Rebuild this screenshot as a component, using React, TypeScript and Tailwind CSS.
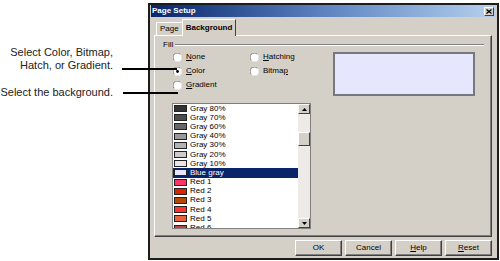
const colors = [
  { name: 'Gray 80%', c: '#333333' },
  { name: 'Gray 70%', c: '#4c4c4c' },
  { name: 'Gray 60%', c: '#666666' },
  { name: 'Gray 40%', c: '#999999' },
  { name: 'Gray 30%', c: '#b3b3b3' },
  { name: 'Gray 20%', c: '#cccccc' },
  { name: 'Gray 10%', c: '#e6e6e6' },
  { name: 'Blue gray', c: '#e6e6ff', selected: true },
  { name: 'Red 1', c: '#ff3366' },
  { name: 'Red 2', c: '#dc2300' },
  { name: 'Red 3', c: '#b84700' },
  { name: 'Red 4', c: '#ff3333' },
  { name: 'Red 5', c: '#eb613d' },
  { name: 'Red 6', c: '#b84747' },
];

function Radio({ checked }: { checked?: boolean }) {
  return (
    <svg width="9" height="9" viewBox="0 0 9 9" className="shrink-0">
      <circle cx="4.5" cy="4.5" r="4" fill="#fff" />
      <path d="M1.2 7.2 A4 4 0 0 1 7.2 1.2" fill="none" stroke="#808080" strokeWidth="1" />
      <path d="M7.8 1.8 A4 4 0 0 1 1.8 7.8" fill="none" stroke="#e8e8e8" strokeWidth="1" />
      {checked && <circle cx="4.5" cy="4.5" r="1.4" fill="#000" />}
    </svg>
  );
}

function RadioItem({ label, u, checked }: { label: string; u: number; checked?: boolean }) {
  return (
    <div className="flex items-center gap-[4px] h-[14px]">
      <Radio checked={checked} />
      <span>
        {label.slice(0, u)}
        <span className="underline">{label[u]}</span>
        {label.slice(u + 1)}
      </span>
    </div>
  );
}

function Btn({ children }: { children: React.ReactNode }) {
  return (
    <button className="w-[47px] h-[16px] bg-[#d4d0c8] border border-t-white border-l-white border-r-[#404040] border-b-[#404040] shadow-[inset_-1px_-1px_0_#808080] text-[8px] text-black flex items-center justify-center">
      {children}
    </button>
  );
}

function Arrow({ down }: { down?: boolean }) {
  return (
    <div className="w-[12px] h-[10px] bg-[#d4d0c8] border border-t-white border-l-white border-r-[#404040] border-b-[#404040] flex items-center justify-center">
      <svg width="5" height="3" viewBox="0 0 5 3">
        <path d={down ? 'M0 0 H5 L2.5 3 Z' : 'M0 3 H5 L2.5 0 Z'} fill="#000" />
      </svg>
    </div>
  );
}

export default function App() {
  return (
    <div className="relative w-[500px] h-[261px] bg-white overflow-hidden font-['Liberation_Sans',Arial,sans-serif]">
      <div className="flex">
        {/* Annotations */}
        <div className="w-[148px] pr-[35px] text-right text-[11px] leading-[12.5px] text-[#222]">
          <p className="mt-[46px]">Select Color, Bitmap,</p>
          <p>Hatch, or Gradient.</p>
          <p className="mt-[15px]">Select the background.</p>
        </div>

        {/* Dialog */}
        <div className="mt-[3px] w-[351px] h-[257px] bg-[#d4d0c8] border-2 border-[#1c1c1c] flex flex-col text-[8px] text-black">
          {/* Title bar */}
          <div className="mx-[1px] h-[12px] bg-gradient-to-r from-[#0a246a] via-[#5d84c0] to-[#b6d0ee] flex items-center justify-between pl-[1px] pr-[2px]">
            <span className="text-white font-bold text-[8px] leading-none">Page Setup</span>
            <div className="w-[10px] h-[9px] bg-[#d4d0c8] border border-t-white border-l-white border-r-[#404040] border-b-[#404040] flex items-center justify-center">
              <svg width="6" height="5" viewBox="0 0 6 5">
                <path d="M0.5 0.5 L5.5 4.5 M5.5 0.5 L0.5 4.5" stroke="#000" strokeWidth="1.3" />
              </svg>
            </div>
          </div>

          {/* Tabs */}
          <div className="h-[18px] flex items-end pl-[6px]">
            <div className="h-[13px] px-[3px] flex items-center border-t border-l border-white">Page</div>
            <div className="relative z-10 -mb-[1px] h-[17px] px-[3px] flex items-center font-bold bg-[#d4d0c8] border-t border-l border-white border-r border-r-[#404040]">
              Background
            </div>
          </div>

          {/* Panel */}
          <div className="ml-[4px] mr-[5px] h-[202px] border border-t-white border-l-white border-r-[#404040] border-b-[#404040] shadow-[inset_-1px_-1px_0_#808080] pl-[8px] pt-[4px]">
            <div className="flex items-center h-[10px] pr-[7px]">
              <span>Fill</span>
              <div className="flex-1 ml-[2px] h-[2px] border-t border-[#808080] border-b border-b-white" />
            </div>

            <div className="flex ml-[9px]">
              <div className="w-[139px] flex flex-col">
                <div className="grid grid-cols-[77px_auto] pl-[1px]">
                  <RadioItem label="None" u={0} />
                  <RadioItem label="Hatching" u={0} />
                  <RadioItem label="Color" u={0} checked />
                  <RadioItem label="Bitmap" u={5} />
                  <RadioItem label="Gradient" u={0} />
                </div>

                {/* Color list */}
                <div className="mt-[11px] h-[126px] border border-[#808080] bg-white flex overflow-hidden">
                  <div className="flex-1 flex flex-col">
                    {colors.map((c) => (
                      <div
                        key={c.name}
                        className={`h-[9.2px] shrink-0 flex items-center pl-[1px] ${c.selected ? 'bg-[#0a246a] text-white' : ''}`}
                      >
                        <div className="w-[13px] h-[7px] border border-[#222]" style={{ background: c.c }} />
                        <span className="ml-[3px] leading-none">{c.name}</span>
                      </div>
                    ))}
                  </div>
                  <div className="w-[12px] bg-[#eeeae8] flex flex-col">
                    <Arrow />
                    <div className="mt-[18px] w-[12px] h-[14px] bg-[#d4d0c8] border border-t-white border-l-white border-r-[#404040] border-b-[#404040]" />
                    <div className="flex-1" />
                    <Arrow down />
                  </div>
                </div>
              </div>

              {/* Preview */}
              <div className="ml-[22px] mt-[2px] w-[142px] h-[44px] bg-[#e6e6ff] border-2 border-[#77777f]" />
            </div>
          </div>

          {/* Buttons */}
          <div className="mt-[3px] flex justify-end gap-[3px] pr-[5px]">
            <Btn>OK</Btn>
            <Btn>Cancel</Btn>
            <Btn>
              <span className="underline">H</span>elp
            </Btn>
            <Btn>
              <span className="underline">R</span>eset
            </Btn>
          </div>
        </div>
      </div>

      {/* Callout lines over the dialog */}
      <div className="absolute left-[122px] top-[68px] w-[55px] h-[2px] bg-black" />
      <div className="absolute left-[123px] top-[92px] w-[55px] h-[2px] bg-black" />
    </div>
  );
}
